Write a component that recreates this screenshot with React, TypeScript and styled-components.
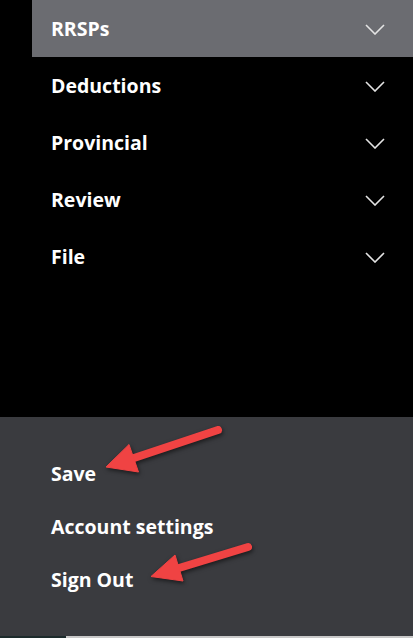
import styled, { createGlobalStyle } from "styled-components";

const GlobalStyle = createGlobalStyle`
  html, body {
    margin: 0;
    padding: 0;
    background: #000;
  }
  body {
    font-family: "Open Sans", Lato, Arial, sans-serif;
    -webkit-font-smoothing: antialiased;
  }
`;

const Page = styled.div`
  width: 413px;
  height: 638px;
  display: flex;
  flex-direction: column;
  background: #000;
  overflow: hidden;
`;

const Nav = styled.nav`
  height: 417px;
  padding-left: 32px;
  display: flex;
  flex-direction: column;
`;

const NavRow = styled.div<{ active?: boolean }>`
  height: 57px;
  display: flex;
  align-items: center;
  justify-content: space-between;
  padding: 0 28px 0 19px;
  background: ${(props) => (props.active ? "#6b6c71" : "transparent")};
  color: #fff;
  font-size: 19.5px;
  font-weight: 700;
  cursor: pointer;
`;

const Chevron = styled.svg`
  width: 20px;
  height: 11px;
  margin-top: 1px;
`;

const Panel = styled.div`
  position: relative;
  flex: 1;
  background: #3a3b3f;
  padding: 30px 0 0 51px;
  display: flex;
  flex-direction: column;
`;

const PanelLink = styled.div`
  height: 53px;
  display: flex;
  align-items: center;
  color: #fff;
  font-size: 19.5px;
  font-weight: 700;
  cursor: pointer;
`;

const Annotations = styled.svg`
  position: absolute;
  left: 0;
  top: 0;
  width: 413px;
  height: 219px;
  pointer-events: none;
  filter: drop-shadow(1px 2px 2px rgba(0, 0, 0, 0.55));
`;

const Strip = styled.div`
  height: 2px;
  display: flex;
`;

const StripPart = styled.div<{ tone: string; w?: string }>`
  background: ${(props) => props.tone};
  width: ${(props) => props.w ?? "auto"};
  flex: ${(props) => (props.w ? "none" : 1)};
`;

const steps = ["RRSPs", "Deductions", "Provincial", "Review", "File"];

function Arrow({
  tail,
  tip,
  base1,
  base2,
  neck,
}: {
  tail: [number, number];
  tip: [number, number];
  base1: [number, number];
  base2: [number, number];
  neck: [number, number];
}) {
  return (
    <g fill="#f04343" stroke="#f04343">
      <line
        x1={tail[0]}
        y1={tail[1]}
        x2={neck[0]}
        y2={neck[1]}
        strokeWidth={8}
        strokeLinecap="round"
      />
      <polygon
        points={`${tip[0]},${tip[1]} ${base1[0]},${base1[1]} ${base2[0]},${base2[1]}`}
        strokeWidth={1}
        strokeLinejoin="round"
      />
    </g>
  );
}

export default function App() {
  return (
    <>
      <GlobalStyle />
      <Page>
        <Nav>
          {steps.map((s, i) => (
            <NavRow key={s} active={i === 0}>
              {s}
              <Chevron viewBox="0 0 20 11">
                <path
                  d="M1 1 L10 10 L19 1"
                  fill="none"
                  stroke="#e4e4e4"
                  strokeWidth={1.6}
                />
              </Chevron>
            </NavRow>
          ))}
        </Nav>
        <Panel>
          <PanelLink>Save</PanelLink>
          <PanelLink>Account settings</PanelLink>
          <PanelLink>Sign Out</PanelLink>
          <Annotations viewBox="0 0 413 219">
            <Arrow
              tail={[218, 13]}
              neck={[134, 41]}
              tip={[106, 50]}
              base1={[129, 27.5]}
              base2={[138.5, 55]}
            />
            <Arrow
              tail={[248, 130]}
              neck={[179, 151]}
              tip={[151, 159.5]}
              base1={[175, 138]}
              base2={[183, 164]}
            />
          </Annotations>
        </Panel>
        <Strip>
          <StripPart tone="#1d2b2c" w="66px" />
          <StripPart tone="#c9c9c9" />
        </Strip>
      </Page>
    </>
  );
}
